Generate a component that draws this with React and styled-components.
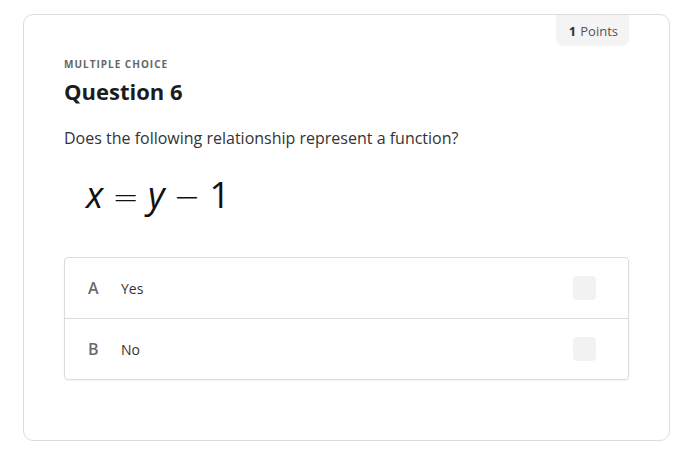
import React from 'react';
import styled, { createGlobalStyle } from 'styled-components';

const GlobalStyle = createGlobalStyle`
  body {
    margin: 0;
    background: #fff;
    font-family: "Open Sans", "Noto Sans", sans-serif;
  }
`;

const Page = styled.div`
  padding: 14px 20px 13px 23px;
`;

const Card = styled.div`
  position: relative;
  width: 647px;
  height: 427px;
  box-sizing: border-box;
  border: 1px solid #dcdcdc;
  border-radius: 10px;
  padding: 0 40px 0 40px;
  display: flex;
  flex-direction: column;
`;

const TopRow = styled.div`
  display: flex;
  justify-content: flex-end;
`;

const PointsBadge = styled.div`
  height: 31px;
  padding: 0 11px 0 13px;
  display: flex;
  align-items: center;
  gap: 4px;
  background: #f4f4f4;
  border-radius: 0 0 7px 7px;
  font-size: 13px;
  color: #555;
  b {
    color: #333;
    font-weight: 700;
  }
`;

const Kicker = styled.div`
  margin-top: 11px;
  font-size: 10px;
  font-weight: 700;
  letter-spacing: 1px;
  color: #666;
  line-height: 14px;
`;

const Title = styled.h2`
  margin: 5px 0 0;
  font-size: 22px;
  font-weight: 700;
  color: #1c1c1c;
  line-height: 30px;
`;

const Prompt = styled.p`
  margin: 21px 0 0;
  font-size: 16px;
  color: #333;
  line-height: 22px;
`;

const Formula = styled.div`
  margin: 24px 0 0 22px;
  font-size: 36px;
  color: #111;
  line-height: 44px;
  display: flex;
  align-items: baseline;
  gap: 9px;
`;

const Var = styled.span`
  font-style: italic;
`;

const Op = styled.span`
  font-family: "DejaVu Sans", sans-serif;
  font-weight: 300;
  font-size: 32px;
`;

const Options = styled.div`
  margin-top: 38px;
  border: 1px solid #dcdcdc;
  border-radius: 4px;
  box-shadow: 0 1px 2px rgba(0, 0, 0, 0.05);
`;

const Option = styled.div`
  height: 60px;
  display: flex;
  align-items: center;
  padding: 0 32px 0 23px;
  border-top: ${(p) => (p.$first ? 'none' : '1px solid #dcdcdc')};
`;

const Letter = styled.span`
  width: 33px;
  font-size: 16px;
  font-weight: 600;
  color: #6b6b6b;
`;

const Answer = styled.span`
  flex: 1;
  font-size: 14px;
  color: #333;
`;

const Check = styled.span`
  width: 23px;
  height: 24px;
  border-radius: 4px;
  background: #f2f2f2;
`;

const options = [
  { key: 'A', text: 'Yes' },
  { key: 'B', text: 'No' },
];

const App = () => (
  <Page>
    <GlobalStyle />
    <Card>
      <TopRow>
        <PointsBadge>
          <b>1</b> Points
        </PointsBadge>
      </TopRow>
      <Kicker>MULTIPLE CHOICE</Kicker>
      <Title>Question 6</Title>
      <Prompt>Does the following relationship represent a function?</Prompt>
      <Formula>
        <Var>x</Var>
        <Op>=</Op>
        <Var>y</Var>
        <Op>−</Op>
        <span>1</span>
      </Formula>
      <Options>
        {options.map((o, i) => (
          <Option key={o.key} $first={i === 0}>
            <Letter>{o.key}</Letter>
            <Answer>{o.text}</Answer>
            <Check />
          </Option>
        ))}
      </Options>
    </Card>
  </Page>
);

export default App;
